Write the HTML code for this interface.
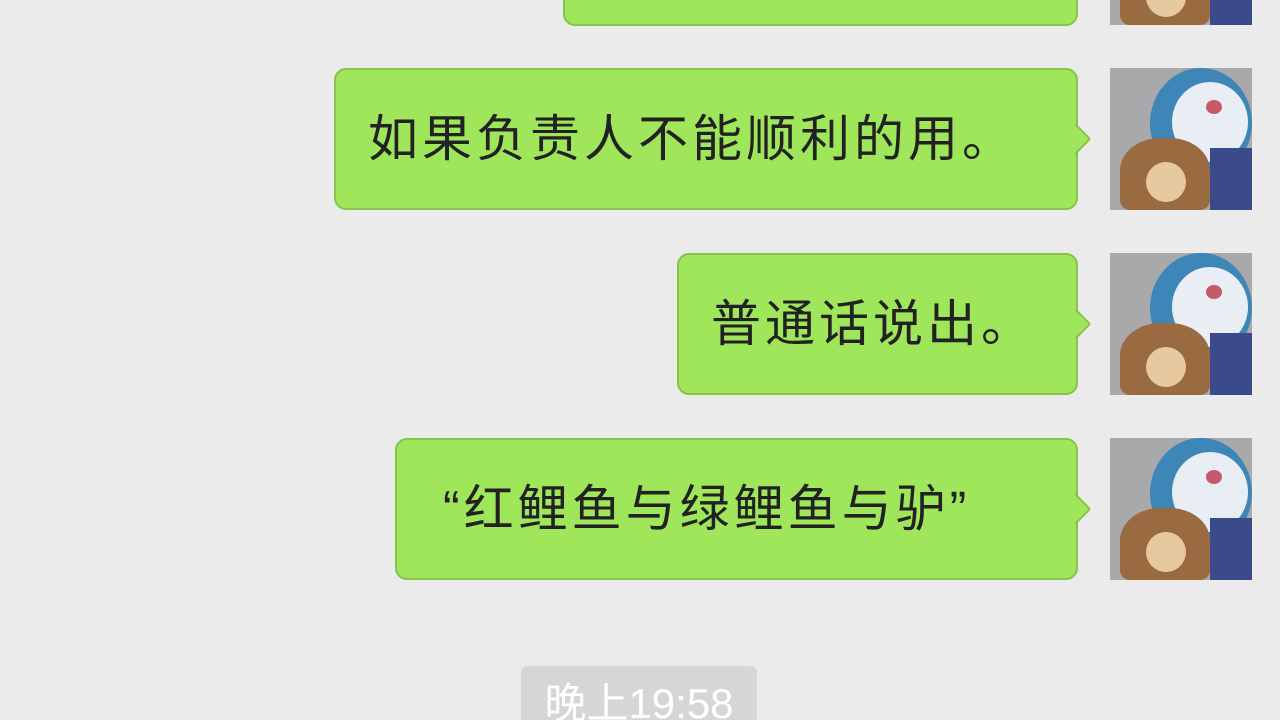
<!DOCTYPE html>
<html><head><meta charset="utf-8"><style>
html,body{margin:0;width:1280px;height:720px;overflow:hidden}
body{background:#ebebeb;position:relative;font-family:"Liberation Sans","Noto Sans CJK SC",sans-serif}
.b{position:absolute;background:#9fe65a;border:2px solid #86c24c;border-radius:12px;box-sizing:border-box;color:#222;font-size:50px;letter-spacing:4px;line-height:1;display:flex;align-items:center;justify-content:flex-start;padding-left:32px;white-space:nowrap}
.b:after{content:"";position:absolute;top:58px;width:20px;height:20px;background:#9fe65a;border-right:2px solid #86c24c;border-top:2px solid #86c24c;transform:rotate(45deg);border-radius:3px;right:-11px}
.b.top:after{display:none}
.a{position:absolute;left:1110px;width:142px;height:142px;background:#a9a8ab;overflow:hidden}
.a .h{position:absolute;left:40px;top:0;width:102px;height:110px;border-radius:50%;background:#3f86b8}
.a .f{position:absolute;left:62px;top:14px;width:76px;height:80px;border-radius:50%;background:#e8eef4}
.a .n{position:absolute;left:96px;top:32px;width:16px;height:14px;border-radius:50%;background:#c65a6a}
.a .d{position:absolute;left:10px;top:70px;width:90px;height:72px;border-radius:45% 45% 10px 10px;background:#9a6a40}
.a .e{position:absolute;left:36px;top:94px;width:40px;height:40px;border-radius:50%;background:#e7c9a0}
.a .g{position:absolute;left:100px;top:80px;width:42px;height:62px;background:#3a4a8a}
.t{position:absolute;left:521px;top:666px;width:236px;height:70px;background:#d6d6d6;border-radius:6px;color:#fff;font-size:42px;text-align:center;line-height:76px}
</style></head><body>
<div class="b top" style="left:563px;top:-40px;width:515px;height:66px"></div>
<div class="a" style="top:-117px"><div class="h"></div><div class="f"></div><div class="n"></div><div class="d"></div><div class="e"></div><div class="g"></div></div>

<div class="b" style="left:334px;top:68px;width:744px;height:142px">如果负责人不能顺利的用。</div>
<div class="a" style="top:68px"><div class="h"></div><div class="f"></div><div class="n"></div><div class="d"></div><div class="e"></div><div class="g"></div></div>

<div class="b" style="left:677px;top:253px;width:401px;height:142px">普通话说出。</div>
<div class="a" style="top:253px"><div class="h"></div><div class="f"></div><div class="n"></div><div class="d"></div><div class="e"></div><div class="g"></div></div>

<div class="b" style="left:395px;top:438px;width:683px;height:142px;padding-left:46px">“红鲤鱼与绿鲤鱼与驴”</div>
<div class="a" style="top:438px"><div class="h"></div><div class="f"></div><div class="n"></div><div class="d"></div><div class="e"></div><div class="g"></div></div>

<div class="t">晚上19:58</div>
</body></html>
